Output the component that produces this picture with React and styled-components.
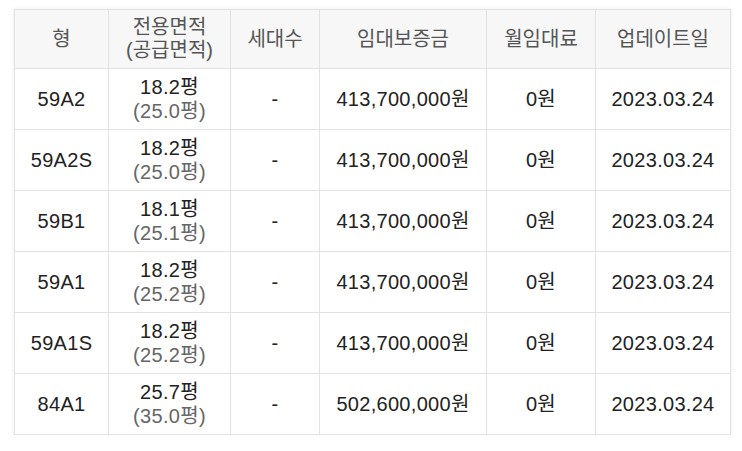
import React from "react";
import styled, { createGlobalStyle } from "styled-components";

const GlobalStyle = createGlobalStyle`
  body {
    margin: 0;
    background: #fff;
    font-family: "Liberation Sans", Arial, "Noto Sans CJK KR", sans-serif;
  }
`;

const Wrap = styled.div`
  padding: 9px 12px 0 14px;
`;

const Table = styled.table`
  width: 716px;
  border-collapse: collapse;
  table-layout: fixed;
  box-shadow: 0 0 4px rgba(0, 0, 0, 0.08);
  font-size: 20px;
  color: #222;
`;

const Th = styled.th`
  height: 58px;
  padding: 0;
  background: #f7f7f7;
  color: #555;
  font-weight: normal;
  line-height: 23px;
  border: 1px solid #e2e2e2;
  text-align: center;
`;

const Td = styled.td`
  height: 60px;
  padding: 0;
  line-height: 24px;
  letter-spacing: 0.3px;
  border: 1px solid #e2e2e2;
  text-align: center;
`;

const Sub = styled.div`
  color: #666;
`;

const cols = [94, 122, 89, 167, 109, 135];

const rows = [
  ["59A2", "18.2", "25.0", "413,700,000"],
  ["59A2S", "18.2", "25.0", "413,700,000"],
  ["59B1", "18.1", "25.1", "413,700,000"],
  ["59A1", "18.2", "25.2", "413,700,000"],
  ["59A1S", "18.2", "25.2", "413,700,000"],
  ["84A1", "25.7", "35.0", "502,600,000"],
];

export default function App() {
  return (
    <Wrap>
      <GlobalStyle />
      <Table>
        <colgroup>
          {cols.map((w, i) => (
            <col key={i} style={{ width: w }} />
          ))}
        </colgroup>
        <thead>
          <tr>
            <Th>형</Th>
            <Th>
              전용면적
              <br />
              (공급면적)
            </Th>
            <Th>세대수</Th>
            <Th>임대보증금</Th>
            <Th>월임대료</Th>
            <Th>업데이트일</Th>
          </tr>
        </thead>
        <tbody>
          {rows.map(([type, area, supply, deposit]) => (
            <tr key={type}>
              <Td>{type}</Td>
              <Td>
                <div>{area}평</div>
                <Sub>({supply}평)</Sub>
              </Td>
              <Td>-</Td>
              <Td>{deposit}원</Td>
              <Td>0원</Td>
              <Td>2023.03.24</Td>
            </tr>
          ))}
        </tbody>
      </Table>
    </Wrap>
  );
}
